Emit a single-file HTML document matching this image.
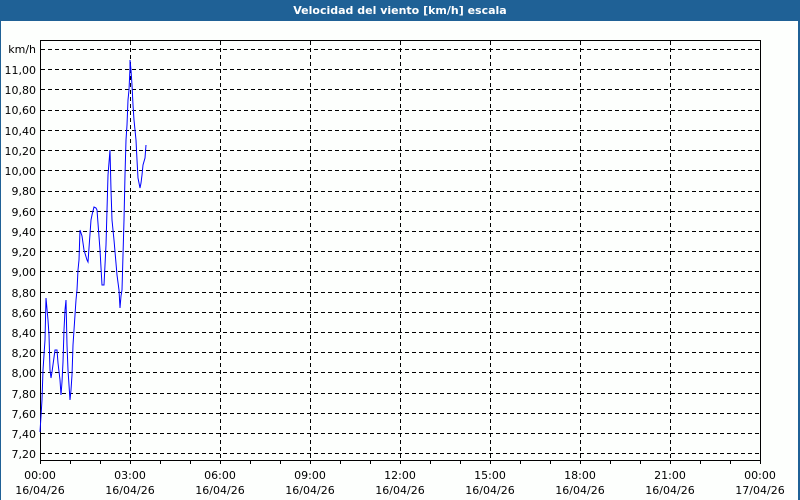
<!DOCTYPE html>
<html><head><style>
body{margin:0;background:#fff;}
.w{position:relative;width:800px;height:500px;background:#fdfffd;font-family:"DejaVu Sans","Liberation Sans",sans-serif;font-size:11px;color:#000;overflow:hidden}
.t{position:absolute;left:0;top:0;width:800px;height:21px;background:#1f6196;color:#fff;font-weight:bold;font-size:11px;text-align:center;line-height:21px}
.bl{position:absolute;left:0;top:21px;width:1px;height:479px;background:#1f6196}
.br{position:absolute;right:0;top:21px;width:2px;height:479px;background:#1f6196}
</style></head><body><div class="w">
<div class="t">Velocidad del viento [km/h] escala</div>
<div class="bl"></div><div class="br"></div>
<svg width="800" height="500" style="position:absolute;left:0;top:0" font-family="DejaVu Sans, Liberation Sans, sans-serif" font-size="11">
<g stroke="#000" stroke-dasharray="4,3" stroke-width="1">
<line x1="41" x2="760" y1="49.5" y2="49.5"/><line x1="41" x2="760" y1="69.5" y2="69.5"/><line x1="41" x2="760" y1="89.5" y2="89.5"/><line x1="41" x2="760" y1="110.5" y2="110.5"/><line x1="41" x2="760" y1="130.5" y2="130.5"/><line x1="41" x2="760" y1="150.5" y2="150.5"/><line x1="41" x2="760" y1="170.5" y2="170.5"/><line x1="41" x2="760" y1="191.5" y2="191.5"/><line x1="41" x2="760" y1="211.5" y2="211.5"/><line x1="41" x2="760" y1="231.5" y2="231.5"/><line x1="41" x2="760" y1="251.5" y2="251.5"/><line x1="41" x2="760" y1="271.5" y2="271.5"/><line x1="41" x2="760" y1="292.5" y2="292.5"/><line x1="41" x2="760" y1="312.5" y2="312.5"/><line x1="41" x2="760" y1="332.5" y2="332.5"/><line x1="41" x2="760" y1="352.5" y2="352.5"/><line x1="41" x2="760" y1="372.5" y2="372.5"/><line x1="41" x2="760" y1="393.5" y2="393.5"/><line x1="41" x2="760" y1="413.5" y2="413.5"/><line x1="41" x2="760" y1="433.5" y2="433.5"/><line x1="41" x2="760" y1="453.5" y2="453.5"/>
<line x1="130.5" x2="130.5" y1="41" y2="460"/><line x1="220.5" x2="220.5" y1="41" y2="460"/><line x1="310.5" x2="310.5" y1="41" y2="460"/><line x1="400.5" x2="400.5" y1="41" y2="460"/><line x1="490.5" x2="490.5" y1="41" y2="460"/><line x1="580.5" x2="580.5" y1="41" y2="460"/><line x1="670.5" x2="670.5" y1="41" y2="460"/>
</g>
<rect x="40.5" y="40.5" width="720" height="420" fill="none" stroke="#000"/>
<g stroke="#000"><line x1="70.5" x2="70.5" y1="460" y2="464"/><line x1="100.5" x2="100.5" y1="460" y2="464"/><line x1="130.5" x2="130.5" y1="460" y2="464"/><line x1="160.5" x2="160.5" y1="460" y2="464"/><line x1="190.5" x2="190.5" y1="460" y2="464"/><line x1="220.5" x2="220.5" y1="460" y2="464"/><line x1="250.5" x2="250.5" y1="460" y2="464"/><line x1="280.5" x2="280.5" y1="460" y2="464"/><line x1="310.5" x2="310.5" y1="460" y2="464"/><line x1="340.5" x2="340.5" y1="460" y2="464"/><line x1="370.5" x2="370.5" y1="460" y2="464"/><line x1="400.5" x2="400.5" y1="460" y2="464"/><line x1="430.5" x2="430.5" y1="460" y2="464"/><line x1="460.5" x2="460.5" y1="460" y2="464"/><line x1="490.5" x2="490.5" y1="460" y2="464"/><line x1="520.5" x2="520.5" y1="460" y2="464"/><line x1="550.5" x2="550.5" y1="460" y2="464"/><line x1="580.5" x2="580.5" y1="460" y2="464"/><line x1="610.5" x2="610.5" y1="460" y2="464"/><line x1="640.5" x2="640.5" y1="460" y2="464"/><line x1="670.5" x2="670.5" y1="460" y2="464"/><line x1="700.5" x2="700.5" y1="460" y2="464"/><line x1="730.5" x2="730.5" y1="460" y2="464"/><line x1="40.5" x2="40.5" y1="460" y2="464"/><line x1="760.5" x2="760.5" y1="460" y2="464"/></g>
<polyline fill="none" stroke="#0000ff" stroke-width="1" points="40,432 42,400 43,370 45,340 46,298 48,320 49,335 50,370 51,378 52,372 55,350 57,350 58,363 60,380 61,395 62,382 63,362 64,330 65,310 66,300 67,345 68,370 70,400 71,390 72,375 73,345 74,330 76,300 77,290 78,270 79,260 80,230 82,236 84,250 87,260 88,262 91,220 92,215 94,207 96,208 97,210 100,250 102,285 104,285 106,245 107,210 108,175 110,150 111,190 112,220 114,240 117,275 119,290 120,308 121,296 122,290 123,255 124,220 125,175 126,140 127,125 128,100 129,90 130,68 130,60 131,70 132,85 133,105 134,120 136,140 137,160 138,178 140,188 141,183 142,175 143,165 145,158 146,145"/>
<g text-anchor="end" fill="#000"><text x="36" y="53">km/h</text><text x="36" y="74">11,00</text><text x="36" y="94">10,80</text><text x="36" y="114">10,60</text><text x="36" y="135">10,40</text><text x="36" y="155">10,20</text><text x="36" y="175">10,00</text><text x="36" y="195">9,80</text><text x="36" y="216">9,60</text><text x="36" y="236">9,40</text><text x="36" y="256">9,20</text><text x="36" y="276">9,00</text><text x="36" y="297">8,80</text><text x="36" y="317">8,60</text><text x="36" y="337">8,40</text><text x="36" y="357">8,20</text><text x="36" y="377">8,00</text><text x="36" y="398">7,80</text><text x="36" y="418">7,60</text><text x="36" y="438">7,40</text><text x="36" y="458">7,20</text></g>
<g text-anchor="middle"><text x="40" y="479">00:00</text><text x="40" y="494">16/04/26</text><text x="130" y="479">03:00</text><text x="130" y="494">16/04/26</text><text x="220" y="479">06:00</text><text x="220" y="494">16/04/26</text><text x="310" y="479">09:00</text><text x="310" y="494">16/04/26</text><text x="400" y="479">12:00</text><text x="400" y="494">16/04/26</text><text x="490" y="479">15:00</text><text x="490" y="494">16/04/26</text><text x="580" y="479">18:00</text><text x="580" y="494">16/04/26</text><text x="670" y="479">21:00</text><text x="670" y="494">16/04/26</text><text x="760" y="479">00:00</text><text x="760" y="494">17/04/26</text></g>
</svg>
</div></body></html>
